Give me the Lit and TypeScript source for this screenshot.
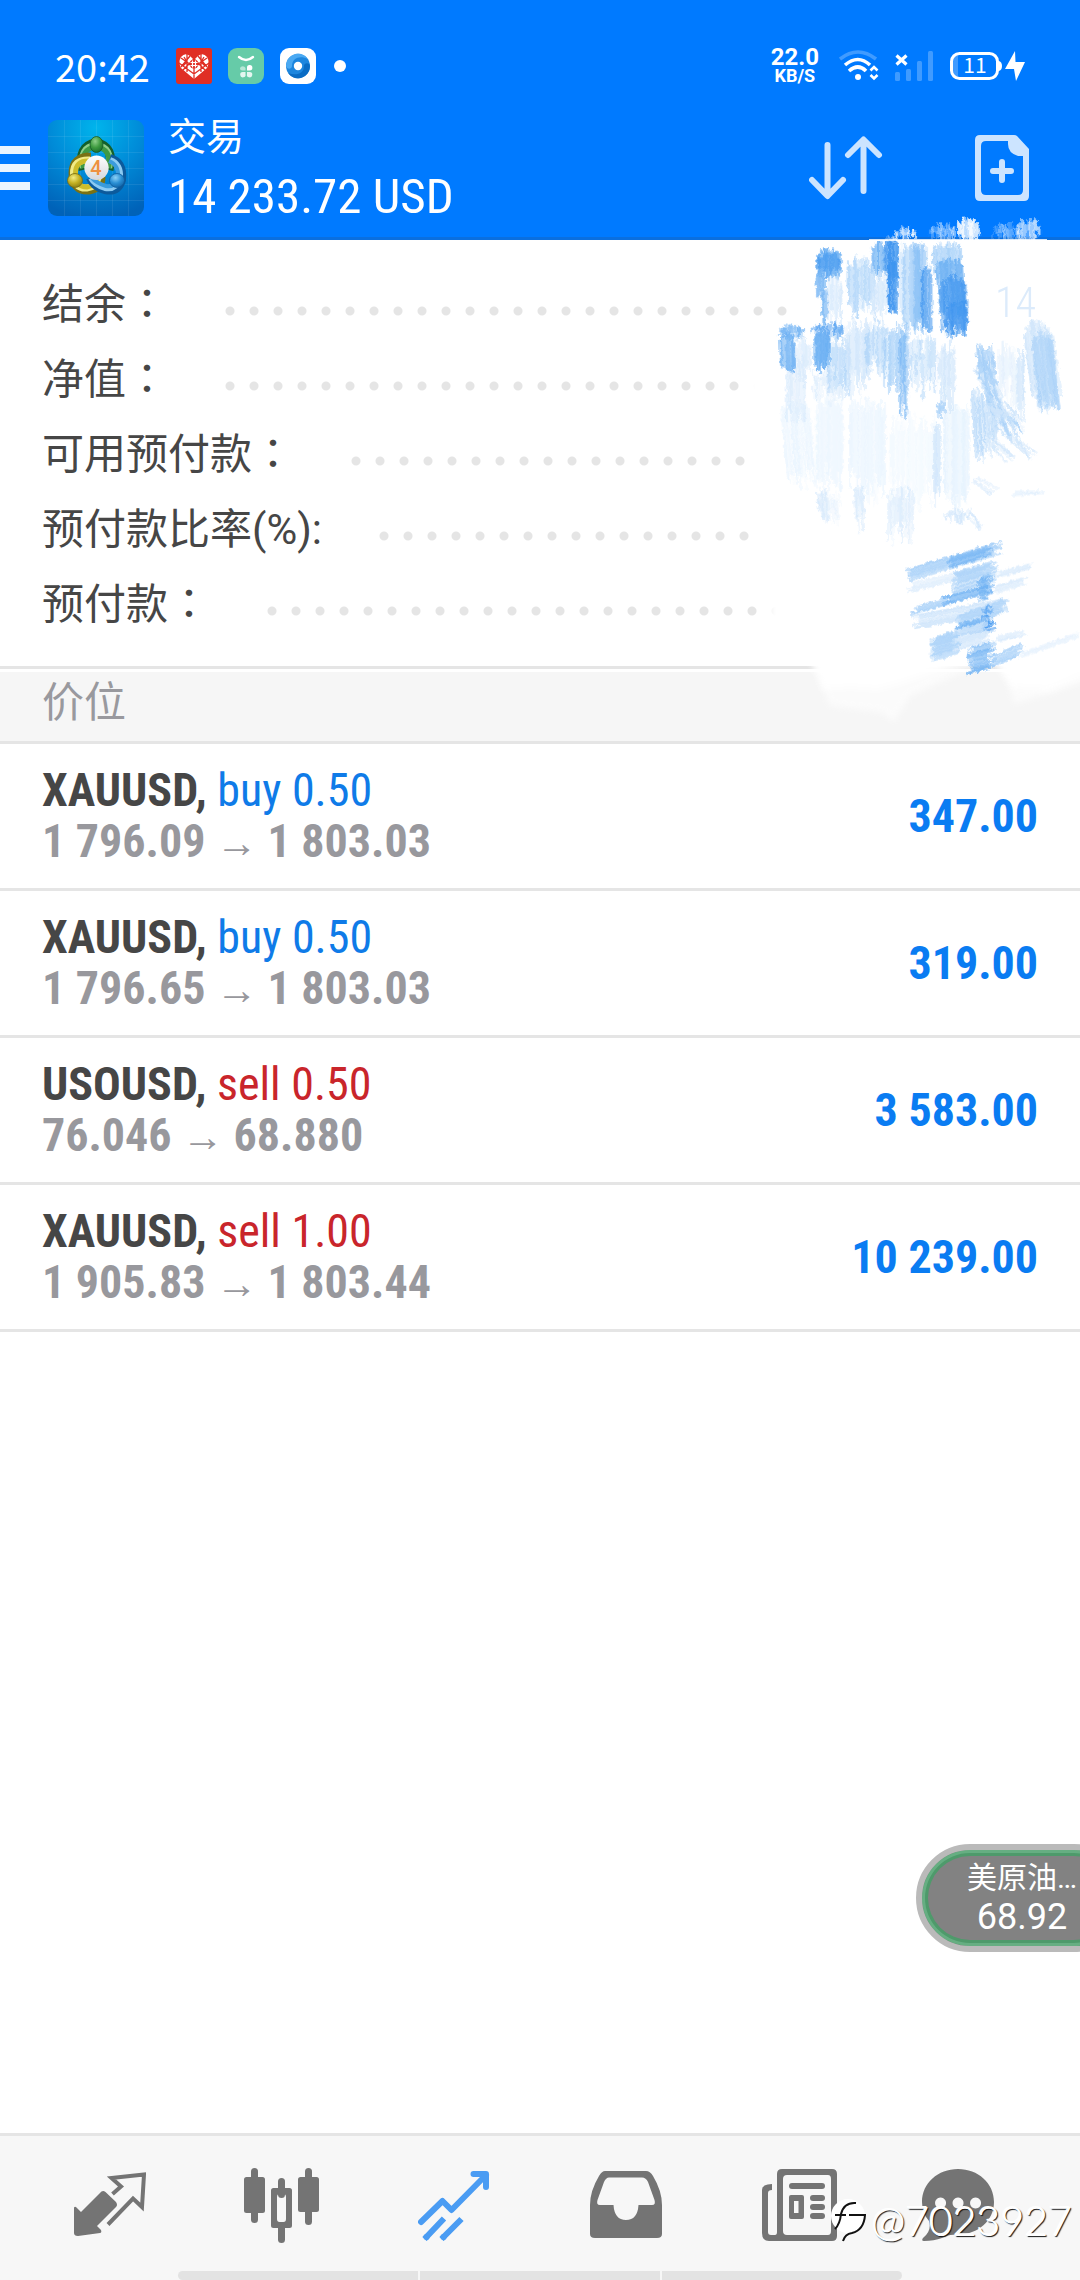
import { LitElement, html, svg, css } from "lit";
import { customElement } from "lit/decorators.js";

interface Position {
  symbol: string;
  side: "buy" | "sell";
  volume: string;
  open: string;
  current: string;
  profit: string;
}

interface Patch {
  x: number;
  y: number;
  w: number;
  h: number;
  color: string;
  alpha: number;
  jitter?: number;
  lean?: number;
}

interface Stroke {
  from: [number, number];
  to: [number, number];
  width: number;
  color: string;
  alpha: number;
}

const POSITIONS: Position[] = [
  { symbol: "XAUUSD", side: "buy", volume: "0.50", open: "1 796.09", current: "1 803.03", profit: "347.00" },
  { symbol: "XAUUSD", side: "buy", volume: "0.50", open: "1 796.65", current: "1 803.03", profit: "319.00" },
  { symbol: "USOUSD", side: "sell", volume: "0.50", open: "76.046", current: "68.880", profit: "3 583.00" },
  { symbol: "XAUUSD", side: "sell", volume: "1.00", open: "1 905.83", current: "1 803.44", profit: "10 239.00" },
];

const SUMMARY = [
  { label: "结余", colon: "：" },
  { label: "净值", colon: "：" },
  { label: "可用预付款", colon: "：" },
  { label: "预付款比率(%):", colon: "" },
  { label: "预付款", colon: "：" },
];

const DEEP = "#3f95ef";
const MID = "#6cb0f3";
const SOFT = "#a5cff8";
const PALE = "#cfe5fb";

/* Brush patches made of vertical bristle marks. */
const PATCHES: Patch[] = [
  { x: 781, y: 400, w: 30, h: 84, color: "#e8f4ff", alpha: 0.6, jitter: 12, lean: 6 },
  { x: 816, y: 394, w: 28, h: 92, color: "#e8f4ff", alpha: 0.6, jitter: 16 },
  { x: 850, y: 396, w: 36, h: 100, color: "#e8f4ff", alpha: 0.6, jitter: 18 },
  { x: 890, y: 410, w: 46, h: 90, color: "#f0f8ff", alpha: 0.6, jitter: 24 },
  { x: 944, y: 400, w: 26, h: 108, color: "#e2f1fe", alpha: 0.6, jitter: 14 },
  { x: 786, y: 350, w: 20, h: 66, color: PALE, alpha: 0.45, jitter: 18 },
  { x: 812, y: 362, w: 40, h: 34, color: PALE, alpha: 0.5, jitter: 18 },
  { x: 817, y: 247, w: 25, h: 32, color: MID, alpha: 0.95, jitter: 5 },
  { x: 818, y: 250, w: 22, h: 26, color: DEEP, alpha: 0.5, jitter: 6 },
  { x: 816, y: 268, w: 10, h: 30, color: MID, alpha: 0.7, jitter: 8 },
  { x: 822, y: 286, w: 6, h: 40, color: MID, alpha: 0.8, jitter: 6 },
  { x: 828, y: 274, w: 15, h: 46, color: PALE, alpha: 0.6, jitter: 12 },
  { x: 847, y: 254, w: 28, h: 58, color: SOFT, alpha: 0.65, jitter: 14 },
  { x: 872, y: 240, w: 14, h: 38, color: MID, alpha: 0.95, jitter: 6 },
  { x: 872, y: 272, w: 16, h: 44, color: PALE, alpha: 0.8, jitter: 12 },
  { x: 885, y: 238, w: 14, h: 44, color: DEEP, alpha: 1, jitter: 5 },
  { x: 888, y: 260, w: 10, h: 54, color: DEEP, alpha: 1, jitter: 3 },
  { x: 899, y: 240, w: 6, h: 80, color: PALE, alpha: 0.7, jitter: 14 },
  { x: 903, y: 240, w: 18, h: 92, color: SOFT, alpha: 0.75, jitter: 10 },
  { x: 914, y: 240, w: 13, h: 92, color: MID, alpha: 0.5, jitter: 10 },
  { x: 921, y: 262, w: 12, h: 72, color: DEEP, alpha: 0.65, jitter: 10 },
  { x: 933, y: 240, w: 29, h: 40, color: SOFT, alpha: 0.8, jitter: 8 },
  { x: 936, y: 256, w: 27, h: 60, color: MID, alpha: 0.9, jitter: 8, lean: 3 },
  { x: 940, y: 274, w: 27, h: 60, color: DEEP, alpha: 0.65, jitter: 10, lean: 2 },
  { x: 946, y: 300, w: 22, h: 34, color: DEEP, alpha: 0.7, jitter: 6 },
  { x: 779, y: 323, w: 25, h: 16, color: MID, alpha: 0.75, jitter: 5 },
  { x: 780, y: 330, w: 15, h: 42, color: MID, alpha: 0.85, jitter: 5, lean: 1 },
  { x: 796, y: 334, w: 16, h: 48, color: PALE, alpha: 0.6, jitter: 12 },
  { x: 811, y: 321, w: 34, h: 16, color: DEEP, alpha: 0.65, jitter: 6 },
  { x: 814, y: 328, w: 17, h: 42, color: MID, alpha: 1, jitter: 8 },
  { x: 828, y: 332, w: 24, h: 58, color: SOFT, alpha: 0.55, jitter: 18 },
  { x: 846, y: 316, w: 24, h: 72, color: PALE, alpha: 0.75, jitter: 16 },
  { x: 866, y: 318, w: 20, h: 56, color: SOFT, alpha: 0.55, jitter: 16 },
  { x: 884, y: 320, w: 20, h: 66, color: SOFT, alpha: 0.7, jitter: 16 },
  { x: 900, y: 322, w: 9, h: 92, color: MID, alpha: 0.55, jitter: 14 },
  { x: 908, y: 332, w: 30, h: 58, color: SOFT, alpha: 0.45, jitter: 22 },
  { x: 938, y: 338, w: 18, h: 64, color: PALE, alpha: 0.75, jitter: 20 },
  { x: 936, y: 400, w: 10, h: 16, color: SOFT, alpha: 0.8, jitter: 6 },
  { x: 934, y: 420, w: 7, h: 84, color: PALE, alpha: 0.7, jitter: 14 },
  { x: 976, y: 340, w: 18, h: 42, color: SOFT, alpha: 0.85, jitter: 12, lean: 3 },
  { x: 974, y: 356, w: 16, h: 60, color: SOFT, alpha: 0.6, jitter: 12, lean: 16 },
  { x: 971, y: 384, w: 24, h: 72, color: SOFT, alpha: 0.55, jitter: 18, lean: 4 },
  { x: 984, y: 398, w: 24, h: 38, color: PALE, alpha: 1, jitter: 14, lean: 12 },
  { x: 996, y: 410, w: 22, h: 26, color: SOFT, alpha: 0.45, jitter: 10, lean: 8 },
  { x: 998, y: 340, w: 18, h: 60, color: PALE, alpha: 0.35, jitter: 18 },
  { x: 1016, y: 346, w: 9, h: 74, color: PALE, alpha: 0.8, jitter: 14 },
  { x: 1024, y: 318, w: 26, h: 86, color: PALE, alpha: 0.9, jitter: 10, lean: 8 },
  { x: 1032, y: 330, w: 22, h: 82, color: SOFT, alpha: 0.6, jitter: 8, lean: 8 },
  { x: 817, y: 486, w: 11, h: 34, color: PALE, alpha: 0.6, jitter: 12, lean: 2 },
  { x: 828, y: 490, w: 12, h: 30, color: PALE, alpha: 0.25, jitter: 12, lean: 2 },
  { x: 854, y: 484, w: 10, h: 44, color: PALE, alpha: 0.6, jitter: 12, lean: 2 },
  { x: 888, y: 484, w: 26, h: 56, color: PALE, alpha: 0.5, jitter: 14 },
  { x: 944, y: 508, w: 26, h: 14, color: PALE, alpha: 0.8, jitter: 6 },
];

/* Slanted brush marks at the foot of the smear. */
const STROKES: Stroke[] = [
  { from: [908, 576], to: [998, 549], width: 13, color: SOFT, alpha: 1 },
  { from: [950, 563], to: [988, 552], width: 10, color: MID, alpha: 0.7 },
  { from: [910, 588], to: [985, 570], width: 9, color: PALE, alpha: 0.5 },
  { from: [954, 584], to: [994, 572], width: 22, color: SOFT, alpha: 0.8 },
  { from: [914, 611], to: [950, 601], width: 7, color: SOFT, alpha: 1 },
  { from: [946, 601], to: [988, 590], width: 8, color: MID, alpha: 1 },
  { from: [916, 622], to: [1004, 606], width: 14, color: PALE, alpha: 0.9 },
  { from: [958, 622], to: [1004, 606], width: 14, color: SOFT, alpha: 0.8 },
  { from: [958, 630], to: [990, 624], width: 13, color: MID, alpha: 0.9 },
  { from: [980, 590], to: [990, 587], width: 24, color: MID, alpha: 0.8 },
  { from: [984, 621], to: [992, 619], width: 26, color: DEEP, alpha: 0.7 },
  { from: [932, 648], to: [986, 632], width: 20, color: PALE, alpha: 0.9 },
  { from: [933, 650], to: [956, 643], width: 24, color: SOFT, alpha: 0.8 },
  { from: [970, 661], to: [992, 655], width: 26, color: MID, alpha: 0.85 },
  { from: [992, 662], to: [1020, 650], width: 12, color: SOFT, alpha: 0.8 },
  { from: [996, 576], to: [1032, 566], width: 6, color: PALE, alpha: 0.6 },
  { from: [996, 590], to: [1024, 582], width: 9, color: PALE, alpha: 0.6 },
  { from: [996, 640], to: [1022, 634], width: 6, color: PALE, alpha: 0.5 },
  { from: [1020, 656], to: [1076, 636], width: 6, color: PALE, alpha: 0.3 },
  { from: [990, 436], to: [1010, 460], width: 8, color: PALE, alpha: 0.6 },
  { from: [1012, 438], to: [1034, 456], width: 8, color: PALE, alpha: 0.7 },
  { from: [974, 480], to: [996, 492], width: 5, color: PALE, alpha: 0.5 },
  { from: [1014, 494], to: [1042, 493], width: 4, color: PALE, alpha: 0.5 },
  { from: [968, 512], to: [984, 528], width: 5, color: PALE, alpha: 0.6 },
];

/* White bristles that spill over the blue bar. */
const SPILL: Patch[] = [
  { x: 886, y: 234, w: 12, h: 8, color: "#ffffff", alpha: 0.5, jitter: 4 },
  { x: 896, y: 226, w: 22, h: 17, color: "#ffffff", alpha: 0.85, jitter: 7 },
  { x: 930, y: 222, w: 26, h: 21, color: "#ffffff", alpha: 0.55, jitter: 9 },
  { x: 958, y: 216, w: 22, h: 27, color: "#ffffff", alpha: 1, jitter: 7 },
  { x: 993, y: 221, w: 26, h: 21, color: "#ffffff", alpha: 0.4, jitter: 10 },
  { x: 1018, y: 217, w: 23, h: 26, color: "#ffffff", alpha: 0.6, jitter: 9 },
];

function randomSource(seed: number) {
  let state = seed;
  return () => {
    state = (state * 1664525 + 1013904223) % 4294967296;
    return state / 4294967296;
  };
}

function bristles(patches: Patch[], seed: number) {
  const random = randomSource(seed);
  return patches.map((p) => {
    const marks = [];
    const jitter = p.jitter ?? 4;
    for (let dx = 0; dx < p.w; dx += 1) {
      const edge = Math.abs((dx - p.w / 2) / (p.w / 2));
      const round = edge * edge * edge * 6;
      const x = p.x + dx;
      const y1 = p.y + round + random() * jitter;
      const y2 = p.y + p.h - round + (random() - 0.7) * 2 * jitter;
      const alpha = p.alpha * (0.3 + random() * 0.6);
      marks.push(svg`<line x1=${x} y1=${y1.toFixed(1)} x2=${x + (p.lean ?? 0)} y2=${y2.toFixed(1)}
        stroke=${p.color} stroke-width="2.2" opacity=${alpha.toFixed(2)}/>`);
    }
    return marks;
  });
}

function sweeps(strokes: Stroke[], seed: number) {
  const random = randomSource(seed);
  return strokes.map((s) => {
    const marks = [];
    for (let d = -s.width / 2; d < s.width / 2; d += 1) {
      const start = (random() - 0.5) * 8;
      const end = (random() - 0.5) * 10;
      const alpha = s.alpha * (0.3 + random() * 0.5);
      marks.push(svg`<line x1=${(s.from[0] + start).toFixed(1)} y1=${(s.from[1] + d - start * 0.3).toFixed(1)} x2=${(s.to[0] + end).toFixed(1)} y2=${(s.to[1] + d - end * 0.3).toFixed(1)}
        stroke=${s.color} stroke-width="2.2" opacity=${alpha.toFixed(2)}/>`);
    }
    return marks;
  });
}

@customElement("brush-smear")
export class BrushSmear extends LitElement {
  static styles = css`
    :host { display: block; pointer-events: none; }
    svg { display: block; width: 340px; height: 540px; }
    .ghost { font: 300 42px "Roboto Condensed", "Liberation Sans Narrow", "Liberation Sans", sans-serif; fill: #dcebfb; }
  `;

  render() {
    return html`<svg viewBox="740 200 340 540" aria-hidden="true">
      <defs>
        <filter id="rough" x="-5%" y="-5%" width="110%" height="110%">
          <feTurbulence type="fractalNoise" baseFrequency="0.3 0.2" numOctaves="2" seed="4" result="n"/>
          <feDisplacementMap in="SourceGraphic" in2="n" scale="5" xChannelSelector="R" yChannelSelector="G"/>
        </filter>
        <filter id="haze" x="-5%" y="-5%" width="110%" height="110%"><feGaussianBlur stdDeviation="3"/></filter>
      </defs>
      <path filter="url(#haze)" fill="#ffffff" d="M790 256 H1090 V672 L1050 690 L1012 688 L996 664 L960 664 L900 684 L878 690 L850 688 L824 690 L811 658 L788 650 L770 630 V560 L752 550 L757 520 L752 440 L748 380 L752 350 L794 330 Z"/>
      <path filter="url(#haze)" fill="#ffffff" opacity="0.6" d="M811 660 L830 706 L880 712 L894 722 L910 696 L980 664 L1004 664 L1014 704 L1060 690 L1090 680 V660 Z"/>
      <g filter="url(#rough)">
        ${bristles(PATCHES, 11)}
        ${sweeps(STROKES, 7)}
        ${bristles(SPILL, 5)}
      </g>
      <path fill="#ffffff" opacity="0.8" d="M869 239h178v2h-178z"/>
      <text class="ghost" x="995" y="317">14</text>
    </svg>`;
  }
}

@customElement("app-root")
export class AppRoot extends LitElement {
  static styles = css`
    :host {
      --blue: #007aff;
      --line: #e5e5e5;
      --panel: #f7f7f7;
      --condensed: "Roboto Condensed", "Liberation Sans Narrow", "Liberation Sans", sans-serif;
      --label: Roboto, "Noto Sans CJK SC", sans-serif;
      display: flex;
      flex-direction: column;
      position: relative;
      min-height: 100vh;
      overflow: hidden;
      background: #ffffff;
      color: #464646;
      font-family: var(--label);
    }
    * { box-sizing: border-box; }
    svg { display: block; flex: none; }
    button { border: 0; padding: 0; margin: 0; background: none; color: inherit; font: inherit; cursor: pointer; }
    dl, dd, dt, ul, h1, h2, p { margin: 0; padding: 0; font-weight: 400; }

    .top { background: var(--blue); color: #ffffff; border-bottom: 3px solid #0a6fdf; padding: 48px 0 21px; }
    .status { display: flex; align-items: center; justify-content: space-between; height: 36px; padding: 0 54px 0 55px; }
    .status-left { display: flex; align-items: center; gap: 16px; }
    .status-right { display: flex; align-items: center; gap: 16px; }
    .clock { font: 400 38px/36px "Noto Sans CJK SC", sans-serif; margin-right: 10px; }
    .speed { display: flex; flex-direction: column; align-items: center; font-family: Roboto, sans-serif; font-weight: 700; margin-right: 4px; }
    .speed-value { font-size: 24px; line-height: 20px; }
    .speed-unit { font-size: 18px; line-height: 18px; }

    .bar { display: flex; align-items: center; height: 96px; margin-top: 36px; padding-right: 51px; }
    .menu { margin-right: 18px; }
    .titles { display: flex; flex-direction: column; gap: 6px; margin-left: 24px; padding-top: 4px; flex: 1; }
    .title { font-size: 38px; line-height: 48px; }
    .funds { font-family: var(--condensed); font-size: 49px; line-height: 60px; white-space: nowrap; }
    .tools { display: flex; align-items: center; gap: 92px; }

    .summary { padding: 25px 42px 26px; border-bottom: 3px solid var(--line); }
    .row { display: flex; align-items: center; height: 75px; }
    .label { font-size: 42px; line-height: 75px; white-space: nowrap; }
    .colon { font-family: "Noto Sans CJK TC", sans-serif; }
    .dots {
      flex: 1;
      height: 24px;
      margin: 17px 0 0 50px;
      background: radial-gradient(circle at center, #e5e5e5 4px, transparent 5px) 0 0 / 24px 24px repeat-x;
    }

    .group { margin-top: 3px; height: 72px; padding: 0 42px 8px; display: flex; align-items: center;
      background: #f6f6f6; border-bottom: 3px solid var(--line); }
    .group-title { font-size: 42px; line-height: 60px; color: #99999e; }

    .positions { list-style: none; flex: 1; }
    .position { display: flex; align-items: center; justify-content: space-between; padding: 21px 42px;
      border-bottom: 3px solid var(--line); font-family: var(--condensed); font-size: 46px; line-height: 51px; white-space: nowrap; }
    .symbol { font-weight: 700; }
    .buy { color: #0f7be8; }
    .sell { color: #c9252b; }
    .prices { font-weight: 700; color: #98989d; display: flex; align-items: baseline; gap: 10px; }
    .arrow { font: 700 42px/42px "Liberation Sans", sans-serif; }
    .profit { font-weight: 700; color: #0a7cf2; }

    .ticker {
      position: absolute; right: -48px; top: 1844px; width: 212px; height: 108px;
      display: flex; flex-direction: column; align-items: center; justify-content: center;
      border: 6px solid #bababa; border-radius: 54px; background: #828282; color: #ffffff;
      box-shadow: inset 0 0 0 3px #66ae82, inset 0 0 0 6px #4e9a6b;
    }
    .ticker-name { font-size: 30px; line-height: 38px; }
    .ticker-price { font-size: 36px; line-height: 40px; }

    .tabs { position: relative; display: grid; grid-template-columns: repeat(6, 1fr); height: 147px; padding: 0 24px 6px;
      background: var(--panel); border-top: 3px solid var(--line); color: #747474; }
    .tab { display: flex; align-items: center; justify-content: center; color: inherit; }
    .active { color: #4a9cf3; }
    .handle { position: absolute; left: 50%; bottom: 0; width: 724px; height: 9px; margin-left: -362px;
      display: grid; grid-template-columns: repeat(3, 1fr); gap: 2px; }
    .handle-part { background: #e3e3e3; }
    .handle-part:first-child { border-radius: 5px 0 0 5px; }
    .handle-part:last-child { border-radius: 0 5px 5px 0; }

    .mark { position: absolute; right: 9px; bottom: 36px; display: flex; align-items: center; gap: 5px; color: #ffffff; }
    .mark-text { font: 300 41px/48px Lato, sans-serif; text-shadow: 1px 1px 0 #ffffff, 2px 2px 1px #111111; }
    .smear { position: absolute; right: 0; top: 200px; }
  `;

  private statusIcons() {
    return html`
      <svg width="36" height="36" viewBox="0 0 36 36" aria-hidden="true">
        <rect width="36" height="36" rx="3" fill="#e02e24"/>
        <path fill="#fff" d="M18 31 L5 20 Q2 14 5 9 Q9 4 14 8 L18 12 L22 8 Q27 4 31 9 Q34 14 31 20 Z"/>
        <path fill="none" stroke="#e02e24" stroke-width="1.3" d="M18 11 V31 M11 6 V24 M25 6 V24 M3 15 L18 26 L33 15 M5 10 L18 19 L31 10 M7 22 L18 11 L29 22 M14 8 L5 19 M22 8 L31 19 M8 9 L11 14 L7 18 M28 9 L25 14 L29 18"/>
        <circle cx="18" cy="16" r="4.5" fill="#e02e24"/>
        <path stroke="#fff" stroke-width="1.2" d="M14.500 14.500h7M14.500 17.500h7M16.500 12.500v7M19.500 12.500v7"/>
      </svg>
      <svg width="36" height="36" viewBox="0 0 36 36" aria-hidden="true">
        <rect width="36" height="36" rx="9" fill="#66cba8"/>
        <path d="M11 9 Q18 15 25 9" fill="none" stroke="#fff" stroke-width="2.4" stroke-linecap="round"/>
        <path fill="#b6e6d6" d="M12 20a3 3 0 0 1 5.500 0v2.500h-3a2.500 2.500 0 0 1-2.500-2.500z"/>
        <path fill="#fff" d="M19 22.500V20a2.700 2.700 0 1 1 2.700 2.500z"/>
        <path fill="#e4f6f0" d="M17.500 24v2a2.700 2.700 0 1 1-2.700-2zM19 24v2a2.700 2.700 0 1 0 2.700-2z"/>
      </svg>
      <svg width="36" height="36" viewBox="0 0 36 36" aria-hidden="true">
        <rect width="36" height="36" rx="9" fill="#fff"/>
        <circle cx="18" cy="18" r="12" fill="#1d86de"/>
        <path fill="#4aa9f2" d="M6 18a12 12 0 0 1 22-7c-8-4-16-1-16 7 0 3-5 4-6 0z"/>
        <path fill="#0a6cc4" d="M30 18a12 12 0 0 1-22 7c8 3 16 1 16-7 0-3 5-4 6 0z"/>
        <circle cx="18" cy="18" r="4.200" fill="#fff"/>
      </svg>
      <svg width="16" height="36" viewBox="0 0 16 36" aria-hidden="true"><circle cx="8" cy="18" r="6" fill="#fff"/></svg>
    `;
  }

  private signalIcons() {
    return html`
      <svg width="40" height="32" viewBox="0 0 40 32" aria-hidden="true" fill="none" stroke="#fff" stroke-width="3.600">
        <path opacity="0.25" d="M1 9 Q19 -5 37 9"/>
        <path d="M6 15 Q19 4 31 15"/>
        <path d="M10 21 Q19 13 27 21"/>
        <circle cx="19" cy="27" r="3" fill="#fff" stroke="none"/>
        <path stroke-width="2.600" d="M31.500 20.500 L35 17 L38.500 20.500 M31.500 25 L35 28.500 L38.500 25"/>
      </svg>
      <svg width="39" height="32" viewBox="0 0 39 32" aria-hidden="true">
        <path stroke="#fff" stroke-width="3.200" d="M1.500 5.500 L11.500 14.500 M11.500 5.500 L1.500 14.500"/>
        <g fill="#fff" opacity="0.25">
          <rect x="0" y="22" width="5" height="9" rx="1.500"/><rect x="11" y="19" width="5" height="12" rx="1.500"/>
          <rect x="22" y="11" width="5" height="20" rx="1.500"/><rect x="33" y="1" width="5" height="30" rx="1.500"/>
        </g>
      </svg>
      <svg width="76" height="32" viewBox="0 0 76 32" aria-label="11%">
        <rect x="1.500" y="3.500" width="46" height="25" rx="8" fill="none" stroke="#fff" stroke-width="3"/>
        <path fill="#fff" d="M49 11 q3 1 3 5 t-3 5z"/>
        <path fill="#fff" opacity="0.25" d="M8 5v22q-5-1-5-7v-8q0-6 5-7z"/>
        <text x="25" y="23" text-anchor="middle" fill="#fff" font-family="Noto Sans CJK SC, sans-serif" font-size="21">11</text>
        <path fill="#fff" d="M65 1 L55 19 H64 L66 31 L75 12 H65.500 Z"/>
      </svg>
    `;
  }

  private logo() {
    return html`<svg width="96" height="96" viewBox="0 0 96 96" role="img" aria-label="MetaTrader 4">
      <defs>
        <radialGradient id="sky" cx="50%" cy="8%" r="95%"><stop offset="0" stop-color="#00b4ec"/><stop offset="0.5" stop-color="#008bd8"/><stop offset="1" stop-color="#0062b8"/></radialGradient>
        <radialGradient id="gg" cx="40%" cy="30%" r="80%"><stop offset="0" stop-color="#8fd08a"/><stop offset="0.5" stop-color="#3d9a3f"/><stop offset="1" stop-color="#14632a"/></radialGradient>
        <radialGradient id="gy" cx="40%" cy="30%" r="80%"><stop offset="0" stop-color="#f3ec82"/><stop offset="0.5" stop-color="#c3b022"/><stop offset="1" stop-color="#7d7212"/></radialGradient>
        <radialGradient id="gb" cx="40%" cy="30%" r="80%"><stop offset="0" stop-color="#8bd0f6"/><stop offset="0.5" stop-color="#2a8fd4"/><stop offset="1" stop-color="#0d5c9e"/></radialGradient>
        <linearGradient id="gw" x2="0" y2="1"><stop offset="0" stop-color="#ffffff"/><stop offset="1" stop-color="#d5d8dc"/></linearGradient>
      </defs>
      <rect width="96" height="96" rx="9" fill="url(#sky)"/>
      <path stroke="#ffffff" stroke-opacity="0.08" stroke-width="1" d="M16.500 0V96M32.500 0V96M48.500 0V96M64.500 0V96M80.500 0V96M0 16.500H96M0 32.500H96M0 48.500H96M0 64.500H96M0 80.500H96"/>
      <path d="M35 50 Q29 26 48 23 Q67 26 61 50" fill="none" stroke="#14602c" stroke-width="9"/>
      <path d="M35 48 Q31 27 48 25 Q65 27 61 48" fill="none" stroke="#8fcf8a" stroke-width="6.500"/>
      <path d="M35.500 48 Q32 28.500 48 27 Q64 28.500 60.500 48" fill="none" stroke="#3e9a46" stroke-width="5"/>
      <path d="M40 38 Q22 38 22 54 Q22 72 38 71 Q50 69 50 58" fill="none" stroke="#7b7113" stroke-width="9" transform="translate(3 -1)"/>
      <path d="M42 40 Q25 39 25.500 54 Q26 69 39 68 Q48 67 50 58" fill="none" stroke="#f2eb86" stroke-width="7"/>
      <path d="M42 41 Q27 40 27.500 54 Q28 67 39 67 Q47 66 49 58" fill="none" stroke="#cdbd2c" stroke-width="5"/>
      <path d="M62 38 Q76 42 74 60 Q70 73 57 70 Q45 67 42 58" fill="none" stroke="#0c5a9c" stroke-width="8"/>
      <path d="M62 40 Q73 44 72 58 Q68 70 57 68 Q47 65 43 58" fill="none" stroke="#8ccbf3" stroke-width="6"/>
      <path d="M61 41 Q71 45 70 57 Q67 68 58 66 Q48 63 44 58" fill="none" stroke="#3a9bdc" stroke-width="4"/>
      <ellipse cx="48.500" cy="24.500" rx="6.500" ry="8" fill="url(#gg)" stroke="#155a28" stroke-width="0.800"/>
      <ellipse cx="27" cy="60.500" rx="7.500" ry="7" fill="url(#gy)" stroke="#756a10" stroke-width="0.800"/>
      <ellipse cx="69" cy="60.500" rx="7.500" ry="7" fill="url(#gb)" stroke="#0c5a9c" stroke-width="0.800"/>
      <circle cx="48.500" cy="47.800" r="12.200" fill="url(#gw)"/>
      <text x="48" y="55" text-anchor="middle" font-family="Roboto, sans-serif" font-weight="500" font-size="20" fill="#ee9140">4</text>
    </svg>`;
  }

  private tabIcons() {
    return [
      { name: "行情", icon: html`<svg width="72" height="76" viewBox="0 0 72 76" fill="currentColor" aria-hidden="true">
        <path d="M0 40.500 Q1 39 2.500 40.500 L7 45 L26 26 Q28.500 22.500 31.500 25 L42 35 Q44 38 42 40 L23 59 L27 63 Q28 65.500 26 66 L4 69 Q0 69 0 66 Z"/>
        <path fill="none" stroke="currentColor" stroke-width="4" d="M38.500 27 L47 19.500 L37.500 11 L70 7.500 L68 40 L59 31.500 L34 57.500" />
      </svg>` },
      { name: "图表", icon: html`<svg width="76" height="76" viewBox="0 0 76 76" fill="currentColor" aria-hidden="true">
        <rect x="0" y="10" width="21" height="36" rx="2.500"/><rect x="7" y="1" width="7" height="55" rx="3.500"/>
        <rect x="54" y="10" width="21" height="35" rx="2.500"/><rect x="61" y="1" width="7" height="57" rx="3.500"/>
        <rect x="34" y="11" width="7" height="20" rx="3.500"/><rect x="34" y="56" width="7" height="20" rx="3.500"/>
        <path fill-rule="evenodd" d="M29.500 21h16q2.500 0 2.500 2.500v35q0 2.500-2.500 2.500h-16q-2.500 0-2.500-2.500v-35q0-2.500 2.500-2.500z M35.500 27q-2.500 0-2.500 3v22q0 3 2.500 3h4q2.500 0 2.500-3v-22q0-3-2.500-3z"/>
      </svg>` },
      { name: "交易", active: true, icon: html`<svg width="72" height="72" viewBox="0 0 72 72" fill="none" stroke="currentColor" stroke-width="6" stroke-linecap="round" stroke-linejoin="round" aria-hidden="true">
        <path d="M3 53 L24.500 32 L33.500 41 L68 6 M55.500 5 H68 V18"/>
        <path stroke-linecap="butt" d="M6.500 70 L26 49.500 M23.500 70 L43.500 50"/><path d="M8.500 68 h0.100 M25.500 68 h0.100"/>
      </svg>` },
      { name: "历史", icon: html`<svg width="72" height="68" viewBox="0 0 72 68" fill="currentColor" aria-hidden="true">
        <path fill-rule="evenodd" d="M15 0H56Q60 0 63 5Q72 20 72 34V63Q72 67 67 67H5Q0 67 0 63V34Q0 20 9 5Q12 0 15 0Z M19 6.500Q16 6.500 14 11L7.500 29Q6 34 10 34H23.500Q24.500 49 36 49Q47.500 49 48.500 34H62Q66 34 64.500 29L58 11Q56 6.500 52 6.500Z"/>
      </svg>` },
      { name: "新闻", icon: html`<svg width="76" height="76" viewBox="-2 0 76 76" fill="currentColor" aria-hidden="true" overflow="visible">
        <path fill-rule="evenodd" d="M20 2H70Q75 2 75 7V69Q75 74 70 74H7Q0 74 0 66V23Q0 17 10 17V23Q6 23 6 26V65Q6 68 9 68H13Q15 68 15 65V7Q15 2 20 2Z M25 8Q21 8 21 12V64Q21 68 25 68H66Q69 68 69 64V12Q69 8 66 8Z"/>
        <rect x="27" y="16" width="36" height="6" rx="3"/><rect x="48" y="28" width="15" height="6" rx="3"/><rect x="48" y="37" width="15" height="6" rx="3"/><rect x="48" y="46" width="15" height="6" rx="3"/>
        <path fill-rule="evenodd" d="M29 28H40Q42 28 42 30V50Q42 52 40 52H29Q27 52 27 50V30Q27 28 29 28Z M32 34V46H36.500V34Z"/>
      </svg>` },
      { name: "信息", icon: html`<svg width="96" height="76" viewBox="0 0 96 76" fill="currentColor" aria-hidden="true">
        <path fill-rule="evenodd" d="M36 2C56 2 72 16 72 35S56 67 36 68C29 67 26 68 20 71Q12 74 2 74Q-1 74 1 71Q10 64 7 54Q0 46 0 35C0 16 16 2 36 2Z M18.500 30.500a5.500 5.500 0 1 0 .1 0z M36 30.500a5.500 5.500 0 1 0 .1 0z M53.500 30.500a5.500 5.500 0 1 0 .1 0z"/>
      </svg>` },
    ];
  }

  render() {
    return html`
      <header class="top">
        <div class="status">
          <div class="status-left"><span class="clock">20:42</span>${this.statusIcons()}</div>
          <div class="status-right">
            <div class="speed"><span class="speed-value">22.0</span><span class="speed-unit">KB/S</span></div>
            ${this.signalIcons()}
          </div>
        </div>
        <div class="bar">
          <button class="menu" aria-label="菜单">
            <svg width="30" height="44" viewBox="0 0 30 44" fill="#ebf5ff"><path d="M0 0h30v8H0zM0 18h30v8H0zM0 36h30v8H0z"/></svg>
          </button>
          ${this.logo()}
          <div class="titles">
            <h1 class="title">交易</h1>
            <p class="funds">14 233.72 USD</p>
          </div>
          <div class="tools">
            <button aria-label="排序">
              <svg width="74" height="66" viewBox="0 0 74 66" fill="none" stroke="#cce4ff" stroke-width="6" stroke-linecap="round" stroke-linejoin="round">
                <path d="M18.500 10V60M3 45L18.500 61L34 45M54.500 56V6M39 20L54.500 4.500L70 20"/>
              </svg>
            </button>
            <button aria-label="新订单">
              <svg width="54" height="66" viewBox="0 0 54 66" fill="#cce4ff">
                <path fill-rule="evenodd" d="M5 0H39Q41 0 42 1L54 14V61Q54 66 49 66H5Q0 66 0 61V5Q0 0 5 0Z M11 6Q6 6 6 11V55Q6 60 11 60H43Q48 60 48 55V21H43Q33 18 33 9V6Z"/>
                <path fill="none" stroke="#cce4ff" stroke-width="6" stroke-linecap="round" d="M27 27V45M18 36H36"/>
              </svg>
            </button>
          </div>
        </div>
      </header>

      <dl class="summary">
        ${SUMMARY.map((s) => html`<div class="row">
          <dt class="label">${s.label}<span class="colon">${s.colon}</span></dt>
          <dd class="dots"></dd>
        </div>`)}
      </dl>

      <div class="group"><h2 class="group-title">价位</h2></div>
      <ul class="positions">
        ${POSITIONS.map((p) => html`<li class="position">
          <div>
            <div><span class="symbol">${p.symbol},</span> <span class=${p.side}>${p.side} ${p.volume}</span></div>
            <div class="prices"><span>${p.open}</span><span class="arrow">→</span><span>${p.current}</span></div>
          </div>
          <span class="profit">${p.profit}</span>
        </li>`)}
      </ul>

      <nav class="tabs">
        ${this.tabIcons().map((t) => html`<a class=${t.active ? "tab active" : "tab"} href="#" aria-label=${t.name}>${t.icon}</a>`)}
        <div class="handle"><span class="handle-part"></span><span class="handle-part"></span><span class="handle-part"></span></div>
      </nav>

      <brush-smear class="smear"></brush-smear>
      <button class="ticker">
        <span class="ticker-name">美原油…</span>
        <span class="ticker-price">68.92</span>
      </button>
      <div class="mark">
        <svg width="36" height="44" viewBox="0 0 36 44" aria-hidden="true">
          <circle cx="18" cy="18" r="17" fill="#fff"/>
          <path fill="none" stroke="#111" stroke-width="2" d="M5 31Q10 26 11 16Q14 4 26 5M5 17H16M19 17H35Q34 32 22 35Q15 36 13 43"/>
        </svg>
        <span class="mark-text">@7023927</span>
      </div>
    `;
  }
}
